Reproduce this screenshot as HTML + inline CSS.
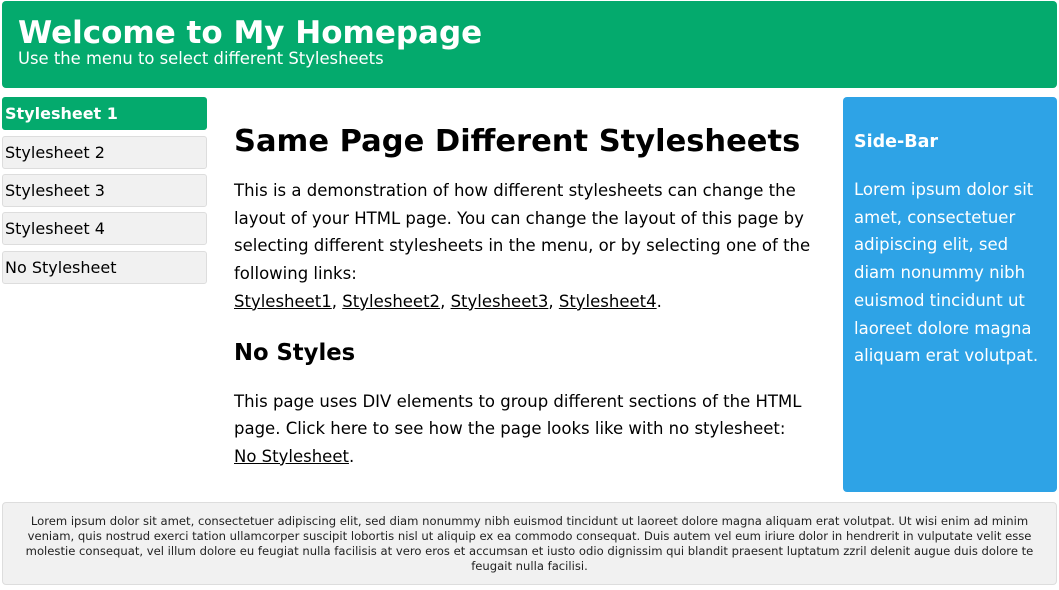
<!DOCTYPE html>
<html><head><meta charset="utf-8"><style>
*{margin:0;padding:0;box-sizing:border-box}
body{width:1059px;height:590px;background:#fff;font-family:"DejaVu Sans","Liberation Sans",sans-serif;color:#000;position:relative;overflow:hidden}
.hd{position:absolute;left:2px;top:1px;width:1055px;height:87px;background:#04aa6d;border-radius:4px;color:#fff}
.hd h1{position:absolute;left:16px;top:14px;font-size:31px;font-weight:bold;white-space:nowrap}
.hd p{position:absolute;left:16px;top:48px;font-size:16.4px;white-space:nowrap}
.m{position:absolute;left:2px;width:205px;height:33px;background:#f1f1f1;border:1px solid #ddd;border-radius:3px;font-size:16px;padding:6px 0 0 2px;white-space:nowrap}
.m.a{background:#04aa6d;color:#fff;font-weight:bold;border-color:#04aa6d}
.main{position:absolute;left:234px;top:124px;white-space:nowrap}
.main h1{font-size:30.5px;font-weight:bold;margin-bottom:18px}
.main p{font-size:16.5px;line-height:27.7px}
.main h2{font-size:22.7px;font-weight:bold;margin:24px 0 22px}
a{color:#000}
.sb{position:absolute;left:843px;top:97px;width:214px;height:395px;background:#2ea3e6;border-radius:4px;color:#fff;padding:35px 0 0 11px;white-space:nowrap}
.sb h3{font-size:17.5px;font-weight:bold;margin-bottom:24px}
.sb p{font-size:16.5px;line-height:27.7px}
.ft{position:absolute;left:2px;top:502px;width:1055px;height:83px;background:#f1f1f1;border:1px solid #ddd;border-radius:4px;font-size:11.6px;line-height:15px;text-align:center;padding:11px 0 0;color:#222;white-space:nowrap}
</style></head><body>
<div class="hd"><h1>Welcome to My Homepage</h1><p>Use the menu to select different Stylesheets</p></div>
<div class="m a" style="top:97px">Stylesheet 1</div>
<div class="m" style="top:136px">Stylesheet 2</div>
<div class="m" style="top:174px">Stylesheet 3</div>
<div class="m" style="top:212px">Stylesheet 4</div>
<div class="m" style="top:251px">No Stylesheet</div>
<div class="main">
<h1>Same Page Different Stylesheets</h1>
<p>This is a demonstration of how different stylesheets can change the<br>layout of your HTML page. You can change the layout of this page by<br>selecting different stylesheets in the menu, or by selecting one of the<br>following links:<br><a href="#">Stylesheet1</a>, <a href="#">Stylesheet2</a>, <a href="#">Stylesheet3</a>, <a href="#">Stylesheet4</a>.</p>
<h2>No Styles</h2>
<p>This page uses DIV elements to group different sections of the HTML<br>page. Click here to see how the page looks like with no stylesheet:<br><a href="#">No Stylesheet</a>.</p>
</div>
<div class="sb"><h3>Side-Bar</h3><p>Lorem ipsum dolor sit<br>amet, consectetuer<br>adipiscing elit, sed<br>diam nonummy nibh<br>euismod tincidunt ut<br>laoreet dolore magna<br>aliquam erat volutpat.</p></div>
<div class="ft">Lorem ipsum dolor sit amet, consectetuer adipiscing elit, sed diam nonummy nibh euismod tincidunt ut laoreet dolore magna aliquam erat volutpat. Ut wisi enim ad minim<br>veniam, quis nostrud exerci tation ullamcorper suscipit lobortis nisl ut aliquip ex ea commodo consequat. Duis autem vel eum iriure dolor in hendrerit in vulputate velit esse<br>molestie consequat, vel illum dolore eu feugiat nulla facilisis at vero eros et accumsan et iusto odio dignissim qui blandit praesent luptatum zzril delenit augue duis dolore te<br>feugait nulla facilisi.</div>
</body></html>
